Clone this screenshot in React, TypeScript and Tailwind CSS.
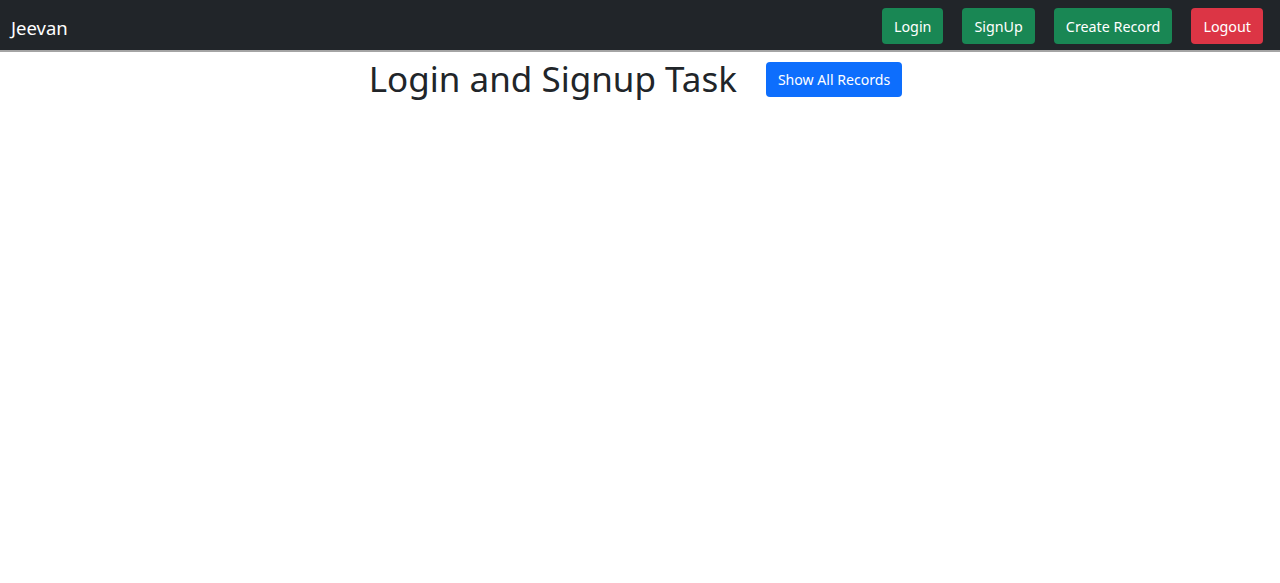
export default function App() {
  return (
    <div className="min-h-[583px] bg-white" style={{ fontFamily: '"Noto Sans", "Open Sans", sans-serif' }}>
      <nav className="flex h-[52px] items-center justify-between border-b-2 border-[#a4a4a4] bg-[#212529] pl-[11px] pr-[17px]">
        <span className="mt-[6px] text-[18.5px] text-white">Jeevan</span>
        <div className="mt-[2px] flex gap-[19px]">
          <button className="h-9 rounded-[4px] bg-[#198754] px-3 pt-[2px] text-[14.3px] text-white">Login</button>
          <button className="h-9 rounded-[4px] bg-[#198754] px-3 pt-[2px] text-[14.3px] text-white">SignUp</button>
          <button className="h-9 rounded-[4px] bg-[#198754] px-3 pt-[2px] text-[14.3px] text-white">Create Record</button>
          <button className="h-9 rounded-[4px] bg-[#dc3545] px-3 pt-[2px] text-[14.3px] text-white">Logout</button>
        </div>
      </nav>
      <div className="flex items-center justify-center gap-[29px] pr-[9px] pt-[6px]">
        <h1 className="text-[35px] leading-[42px] text-[#212529]">Login and Signup Task</h1>
        <button className="h-[35px] rounded-[4px] bg-[#0d6efd] px-3 pt-[1px] text-[14.1px] text-white">Show All Records</button>
      </div>
    </div>
  );
}
